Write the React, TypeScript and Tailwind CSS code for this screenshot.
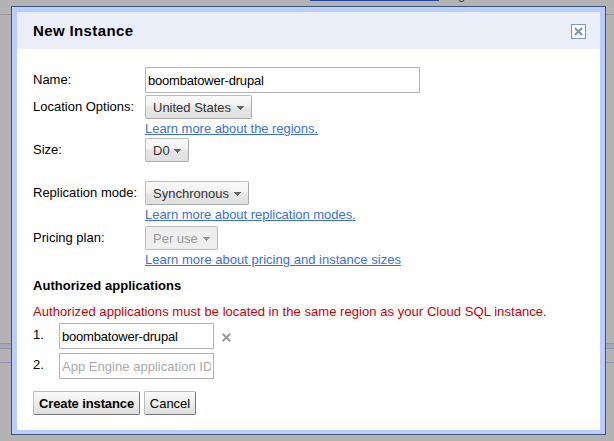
import type { ReactNode } from 'react';

function Caret({ color }: { color: string }) {
  return (
    <svg width="7" height="4" viewBox="0 0 7 4" shapeRendering="crispEdges" className="mt-[2px] shrink-0">
      <path d="M0 0h7v1H0zM1 1h5v1H1zM2 2h3v1H2zM3 3h1v1H3z" fill={color} />
    </svg>
  );
}

function Select({ label, width, disabled = false }: { label: string; width: string; disabled?: boolean }) {
  const look = disabled
    ? 'border-[#bbb] bg-[#eee] text-[#999]'
    : 'border-[#aaa] border-t-[#bbb] border-l-[#bbb] bg-[linear-gradient(#f9f9f9_0%,#f3f3f3_45%,#e6e6e6_50%,#e0e0e0_100%)] text-[#333]';
  return (
    <button disabled={disabled} className={`flex h-6 items-center justify-between rounded-[2px] border px-[7px] leading-[15px] ${look} ${width}`}>
      <span className="whitespace-nowrap">{label}</span>
      <Caret color={disabled ? '#999' : '#666'} />
    </button>
  );
}

function Row({ label, height, pad, children }: { label: string; height: string; pad: string; children: ReactNode }) {
  return (
    <div className={`flex ${height}`}>
      <div className={`w-28 shrink-0 whitespace-nowrap ${pad}`}>{label}</div>
      <div>{children}</div>
    </div>
  );
}

function Learn({ text, tracking }: { text: string; tracking: string }) {
  return (
    <a href="#" className={`mt-[2px] block w-max text-[#3b6fdb] underline decoration-1 underline-offset-[1px] ${tracking}`}>
      {text}
    </a>
  );
}

export default function App() {
  return (
    <div className="relative h-[441px] w-[614px] overflow-hidden bg-[#b3b3b3] font-['Liberation_Sans',Arial,sans-serif] text-[13px] leading-[15px] text-black">
      <div className="absolute left-[310px] top-0 h-px w-[129px] bg-[#2447a0]" />
      <span className="absolute left-[458px] top-[-13px] text-[#444]">g</span>
      <div className="absolute top-[14px] h-px w-full bg-[#999]" />
      <div className="absolute top-[343px] h-[6px] w-full border-y border-[#8f97b3] bg-[#a5a9b5]" />
      <div className="absolute top-[362px] h-px w-full bg-[#8f97b3]" />

      <div className="absolute left-[11px] top-[6px] h-[429px] w-[595px] border border-[#3a5778] bg-[#bbccff] px-[5px] pb-1 pt-[5px]">
        <div className="flex h-full flex-col bg-white">
          <header className="flex h-[37px] shrink-0 items-center justify-between bg-[#e9eef9] pl-4 pr-[14px]">
            <h1 className="text-[15px] font-bold leading-[18px] tracking-[0.38px]">New Instance</h1>
            <button aria-label="Close" className="mt-px flex size-[15px] items-center justify-center border border-[#7799bb] bg-white">
              <svg width="9" height="9" viewBox="0 0 9 9">
                <path d="M0.9 0.9L8.1 8.1M8.1 0.9L0.9 8.1" stroke="#7799bb" strokeWidth="2.1" />
              </svg>
            </button>
          </header>

          <main className="flex flex-col pl-4 pt-[18px]">
            <Row label="Name:" height="h-7" pad="pt-[5px]">
              <input defaultValue="boombatower-drupal" className="block h-[26px] w-[275px] border border-[#b3b3b3] bg-white pl-[2px] pt-px tracking-[-0.2px] outline-none" />
            </Row>
            <Row label="Location Options:" height="h-[43px]" pad="pt-[4px]">
              <Select label="United States" width="w-[107px]" />
              <Learn text="Learn more about the regions." tracking="tracking-[-0.04px]" />
            </Row>
            <Row label="Size:" height="h-[43px]" pad="pt-[4px]">
              <Select label="D0" width="w-11" />
            </Row>
            <Row label="Replication mode:" height="h-[45px]" pad="pt-[4px]">
              <Select label="Synchronous" width="w-[104px]" />
              <Learn text="Learn more about replication modes." tracking="tracking-[-0.03px]" />
            </Row>
            <Row label="Pricing plan:" height="h-[45px]" pad="pt-[4px]">
              <Select label="Per use" width="w-[73px]" disabled />
              <Learn text="Learn more about pricing and instance sizes" tracking="tracking-[0.02px]" />
            </Row>
            <h2 className="mt-[7px] font-bold tracking-[0.04px]">Authorized applications</h2>
            <p className="mt-[11px] whitespace-nowrap tracking-[0.055px] text-[#cc0000]">Authorized applications must be located in the same region as your Cloud SQL instance.</p>
            <div className="mt-1 flex h-[30px]">
              <span className="w-[26px] pt-[4px]">1.</span>
              <input defaultValue="boombatower-drupal" className="h-[26px] w-[155px] border border-[#b3b3b3] pl-[2px] pt-px tracking-[-0.2px] outline-none" />
              <svg width="9" height="9" viewBox="0 0 9 9" className="ml-2 mt-[10px]">
                <path d="M0.7 0.7L8.3 8.3M8.3 0.7L0.7 8.3" stroke="#999" strokeWidth="2" />
              </svg>
            </div>
            <div className="flex h-[38px]">
              <span className="w-[26px] pt-[4px]">2.</span>
              <input placeholder="App Engine application ID" className="h-[26px] w-[155px] border border-[#b3b3b3] px-[2px] pt-px tracking-[0.03px] outline-none placeholder:text-[#a9a9a9]" />
            </div>
            <div className="flex gap-1">
              <button className="h-6 w-[107px] whitespace-nowrap rounded-[2px] border border-[#777] border-l-[#bbb] border-t-[#bbb] bg-[linear-gradient(#fafafa,#eee_50%,#ddd)] font-bold tracking-[-0.12px]">Create instance</button>
              <button className="h-6 w-[52px] rounded-[2px] border border-[#777] border-l-[#bbb] border-t-[#bbb] bg-[linear-gradient(#fafafa,#eee_50%,#ddd)]">Cancel</button>
            </div>
          </main>
        </div>
      </div>
    </div>
  );
}
